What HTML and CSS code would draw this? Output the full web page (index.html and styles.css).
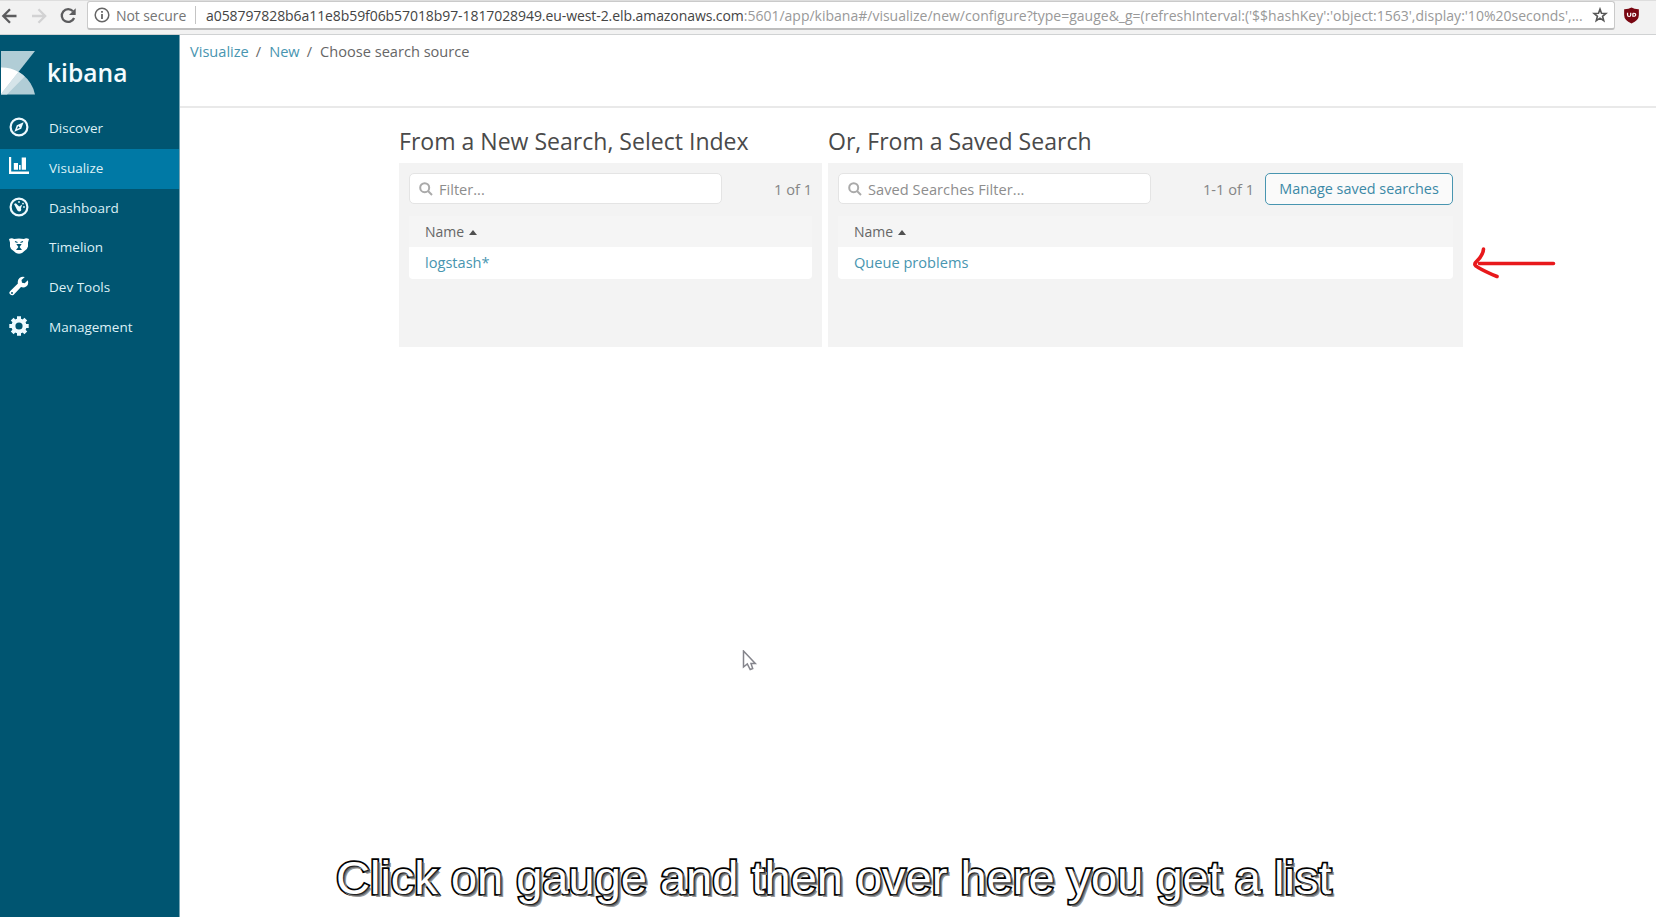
FILE: index.html
```html
<!DOCTYPE html>
<html lang="en">
<head>
<meta charset="utf-8">
<title>Kibana</title>
<link rel="stylesheet" href="styles.css">
</head>
<body>
<div class="page">
  <div class="toolbar">
    <svg class="nav-buttons" width="88" height="34" fill="none" stroke-width="2.3">
      <path d="M16.5 16H3.5M10 9.3L3.3 16L10 22.7" stroke="#5c5c5e"/>
      <path d="M32 16H45M38.5 9.3L45.2 16L38.5 22.7" stroke="#d2d2d3"/>
      <path d="M73 11.3A6.4 6.4 0 1 0 74.1 18" stroke="#5c5c5e"/>
      <path d="M75.7 8.2V15H69Z" fill="#5c5c5e"/>
    </svg>
    <div class="address">
      <svg class="info" width="16" height="16" viewBox="0 0 16 16" fill="none" stroke="#666"><circle cx="8" cy="8" r="6.8" stroke-width="1.5"/><path d="M8 7V12M8 4V5.8" stroke-width="1.8"/></svg>
      <span class="security">Not secure</span>
      <span class="divider"></span>
      <span class="url"><span class="host">a058797828b6a11e8b59f06b57018b97-1817028949.eu-west-2.elb.amazonaws.com</span><span class="path">:5601/app/kibana#/visualize/new/configure?type=gauge&amp;_g=(refreshInterval:('$$hashKey':'object:1563',display:'10%20seconds',...</span></span>
      <svg class="star" width="16" height="16" viewBox="0 0 14 15" fill="none" stroke="#555" stroke-width="1.5"><path d="M7 2L8.4 5.8L12.6 6L9.4 8.7L10.5 12.8L7 10.5L3.5 12.8L4.6 8.7L1.4 6L5.6 5.8Z"/></svg>
    </div>
    <svg class="shield" width="17" height="17" viewBox="0 0 15 17" preserveAspectRatio="none"><path d="M7.5 .5Q10 2.4 14 2.3V8Q14 13.4 7.5 16.5Q1 13.4 1 8V2.3Q5 2.4 7.5 .5Z" fill="#790712"/><path d="M4 5.8V8Q4 9.5 5.4 9.5T6.8 8V5.8M8.7 6.3V9.2Q11.2 9.4 11.2 7.7T8.7 6.3" fill="none" stroke="#fff" stroke-width="1.1"/></svg>
  </div>
  <div class="app">
    <nav class="sidebar">
      <div class="brand">
        <svg width="36" height="46" viewBox="0 0 36 46"><path d="M1 1H35L1 44Z" fill="#b1cdd6"/><path d="M1 17.5A34 34 0 0 1 35 44.5H1Z" fill="#b1cdd6"/><path d="M1 17.5A34 34 0 0 1 18.5 21.9L1 44Z" fill="#fff"/><path d="M18.5 21.9Q22 23.8 24.7 26.5L7 44.5H1V44Z" fill="#d5e4e9"/></svg>
        <span class="brand-name">kibana</span>
      </div>
      <a class="item"><svg class="icon" width="20" height="20" viewBox="0 0 20 20"><circle cx="10" cy="10" r="8.4" fill="none" stroke="#eefaff" stroke-width="2.2"/><path fill-rule="evenodd" d="M14.6 5.2L12.2 11.8L5.4 14.8L7.8 8.2ZM9.2 9.1L8 12L10.8 10.8Z" fill="#eefaff"/></svg><span>Discover</span></a>
      <a class="item active"><svg class="icon chart" width="20" height="20" viewBox="0 0 20 20"><path d="M0 1H2.2V15.6H20V18H0ZM4.8 7H9V13.8H4.8ZM10 9H11.7V13.8H10ZM12.7 1.5H17V13.8H12.7Z" fill="#fff"/></svg><span>Visualize</span></a>
      <a class="item"><svg class="icon" width="20" height="20" viewBox="0 0 20 20"><circle cx="10" cy="10" r="8.4" fill="none" stroke="#eefaff" stroke-width="2.2"/><path d="M5 7L6.8 6.2L10.2 9.4L13.2 7.6L12 11.2Q13 14.4 10 14.5Q8.4 14.4 7.6 12Z" fill="#eefaff"/><g fill="#eefaff"><circle cx="10" cy="5" r=".9"/><circle cx="14" cy="6.6" r=".9"/><circle cx="15" cy="10" r=".9"/></g></svg><span>Dashboard</span></a>
      <a class="item"><svg class="icon" width="20" height="20" viewBox="0 0 20 20"><path d="M0 3Q3 1.5 5 3Q10 1.8 15 3Q17 1.5 20 3L19 6.5V10.5Q18.4 13 16 14.5L13 17Q10 18.5 7 17L4 14.5Q1.4 13 1 10.5V6.5Z" fill="#fff"/><path d="M6 5.5L8.5 6.5M14 5.5L11.5 6.5" stroke="#005571" stroke-width="1.3"/><path d="M7.3 8H12.7L10.6 11L13 14H7L9.4 11Z" fill="#005571"/></svg><span>Timelion</span></a>
      <a class="item"><svg class="icon" width="20" height="20" viewBox="0 0 20 20"><path fill-rule="evenodd" d="M18.8 4.3Q20 8.2 17.5 10.2Q15 12.2 12 11.1L4.7 18.7Q2.8 20 1.1 18.3T1.3 14.9L8.9 7.5Q8.2 4.2 10.5 2.1Q13 0 15.8 1.1L12.5 4.1L13 6.8L15.7 7.3ZM3 16A1 1 0 1 0 3 18A1 1 0 1 0 3 16Z" fill="#fff"/></svg><span>Dev Tools</span></a>
      <a class="item"><svg class="icon" width="20" height="20" viewBox="0 0 20 20"><circle cx="10" cy="10" r="5.6" fill="none" stroke="#eefaff" stroke-width="4"/><g stroke="#eefaff" stroke-width="4"><path d="M10 .3V4M10 16V19.7M.3 10H4M16 10H19.7M3.2 3.2L5.6 5.6M14.4 14.4L16.8 16.8M3.2 16.8L5.6 14.4M14.4 5.6L16.8 3.2"/></g></svg><span>Management</span></a>
    </nav>
    <main class="content">
      <header class="crumbs"><a>Visualize</a><i>/</i><a>New</a><i>/</i><span>Choose search source</span></header>
      <div class="columns">
        <section class="index-source">
          <h2>From a New Search, Select Index</h2>
          <div class="panel">
            <div class="tools">
              <div class="filter"><svg width="14" height="14" viewBox="0 0 14 14" fill="none" stroke="#aaa" stroke-width="2"><circle cx="5.7" cy="5.7" r="4.5"/><path d="M9 9L13 13"/></svg><span>Filter...</span></div>
              <span class="count">1 of 1</span>
            </div>
            <div class="table-head"><span>Name</span><i class="caret"></i></div>
            <div class="row"><a>logstash*</a></div>
          </div>
        </section>
        <section class="saved-source">
          <h2>Or, From a Saved Search</h2>
          <div class="panel">
            <div class="tools">
              <div class="filter"><svg width="14" height="14" viewBox="0 0 14 14" fill="none" stroke="#aaa" stroke-width="2"><circle cx="5.7" cy="5.7" r="4.5"/><path d="M9 9L13 13"/></svg><span class="saved-label">Saved Searches Filter...</span></div>
              <span class="count">1-1 of 1</span>
              <a class="manage">Manage saved searches</a>
            </div>
            <div class="table-head"><span>Name</span><i class="caret"></i></div>
            <div class="row"><a>Queue problems</a></div>
          </div>
        </section>
      </div>
    </main>
  </div>
  <svg class="arrow" width="90" height="40" fill="none" stroke="#e8191c" stroke-width="3.6" stroke-linecap="round" stroke-linejoin="round"><path d="M80.5 20.5H6.5M10.5 6Q10.5 12 2.8 19.2Q.2 22.2 4.7 24.2Q12.5 28.8 24 33.5"/></svg>
  <svg class="cursor" width="16" height="24" viewBox="0 0 16 24"><path d="M1.5 1V17L5.3 14L8.2 19.5L10.7 18.5L9 13.5H13.3Z" fill="#fff" stroke="#85858c" stroke-width="1.5"/></svg>
  <div class="caption">Click on gauge and then over here you get a list</div>
</div>
</body>
</html>
```
FILE: styles.css
```css
* { box-sizing: border-box; }
body { margin: 0; background: #fff; font-family: "Open Sans", sans-serif; font-size: 14.6px; color: #666; }
h2, i { font-weight: 400; font-style: normal; }
svg { flex: none; display: block; }
.page { position: relative; width: 1656px; height: 917px; overflow: hidden; display: flex; flex-direction: column; }
.toolbar { height: 35px; flex: none; display: flex; background: #f2f2f2; border-top: 1px solid #dedede; border-bottom: 1px solid #d0d2d3; }
.nav-buttons { width: 87px; margin-top: -1px; }
.address { width: 1528px; height: 29px; flex: none; border: 1px solid #cacaca; border-bottom-color: #bebebe; border-width: 1px 1px 2px; border-radius: 3px; background: #fff; display: flex; align-items: center; white-space: nowrap; }
.info { margin-left: 6px; }
.security { width: 79px; margin-left: 6px; color: #757575; font-size: 14px; letter-spacing: -.08px; }
.divider { width: 1px; height: 18px; background: #c4c4c4; }
.url { width: 1376px; margin-left: 10px; font-size: 14px; }
.host { color: #444; letter-spacing: -.075px; }
.path { color: #999; }
.star { margin-left: 10px; }
.shield { margin: 6px 0 0 8px; }
.app { display: flex; flex: 1; }
.sidebar { width: 180px; background: #005571; border-right: 1px solid #78a5b4; color: #dcf0f6; }
.brand { height: 74px; display: flex; padding-top: 15px; }
.brand-name { margin: 0 0 0 11px; font-size: 24.6px; line-height: 46px; font-weight: 600; color: #f4fcff; }
.item { height: 39.8px; display: flex; padding-left: 9px; }
.item span { margin-left: 20px; line-height: 39px; font-size: 13.5px; }
.icon { margin-top: 8px; }
.chart { margin-top: 7px; }
.active { background: #0079a5; }
.content { flex: 1; }
.crumbs { height: 73px; padding: 6px 0 0 10px; line-height: 20px; border-bottom: 2px solid #e9e9e9; white-space: nowrap; }
.crumbs a, .row a { color: #4895b0; }
.crumbs i { margin: 0 8px 0 7px; }
.columns { display: flex; gap: 6px; padding: 17px 0 0 219px; }
.index-source { width: 423px; }
.saved-source { width: 635px; }
h2 { margin: 0; height: 38px; line-height: 32px; font-size: 23.05px; color: #4a4a4a; white-space: nowrap; }
.panel { height: 184px; padding: 10px; background: #f3f3f3; }
.tools { height: 43px; display: flex; align-items: flex-start; }
.filter { width: 313px; height: 31px; padding-left: 9px; display: flex; align-items: center; background: #fff; border: 1px solid #e4e4e4; border-radius: 5px; color: #8d8d8d; }
.filter span { margin-left: 6px; }
.saved-label { letter-spacing: .05px; }
.count { margin-left: auto; line-height: 33px; color: #858585; }
.manage { width: 188px; height: 32px; margin-left: 11px; text-align: center; line-height: 29px; font-size: 14.4px; color: #3c89a6; border: 1px solid #4895b0; border-radius: 5px; background: #fafafa; white-space: nowrap; }
.table-head { height: 31px; padding-left: 16px; display: flex; align-items: center; font-size: 14px; background: #f5f5f5; }
.caret { margin: 2px 0 0 5px; border: 4.5px solid transparent; border-top: 0; border-bottom: 5px solid #505050; }
.row { height: 32px; padding-left: 16px; line-height: 31px; background: #fff; border-radius: 0 0 4px 4px; }
.arrow { position: absolute; left: 1473px; top: 243px; }
.cursor { position: absolute; left: 742px; top: 650px; }
.caption { position: absolute; left: 336px; top: 851px; font: 47px/54px "Liberation Sans", sans-serif; color: #fff; white-space: nowrap; -webkit-text-stroke: 3.6px #000; paint-order: stroke fill; text-shadow: 1px 1px 0 #222, 2px 2px 0 #666, 3px 3px 0 #999; }
```
